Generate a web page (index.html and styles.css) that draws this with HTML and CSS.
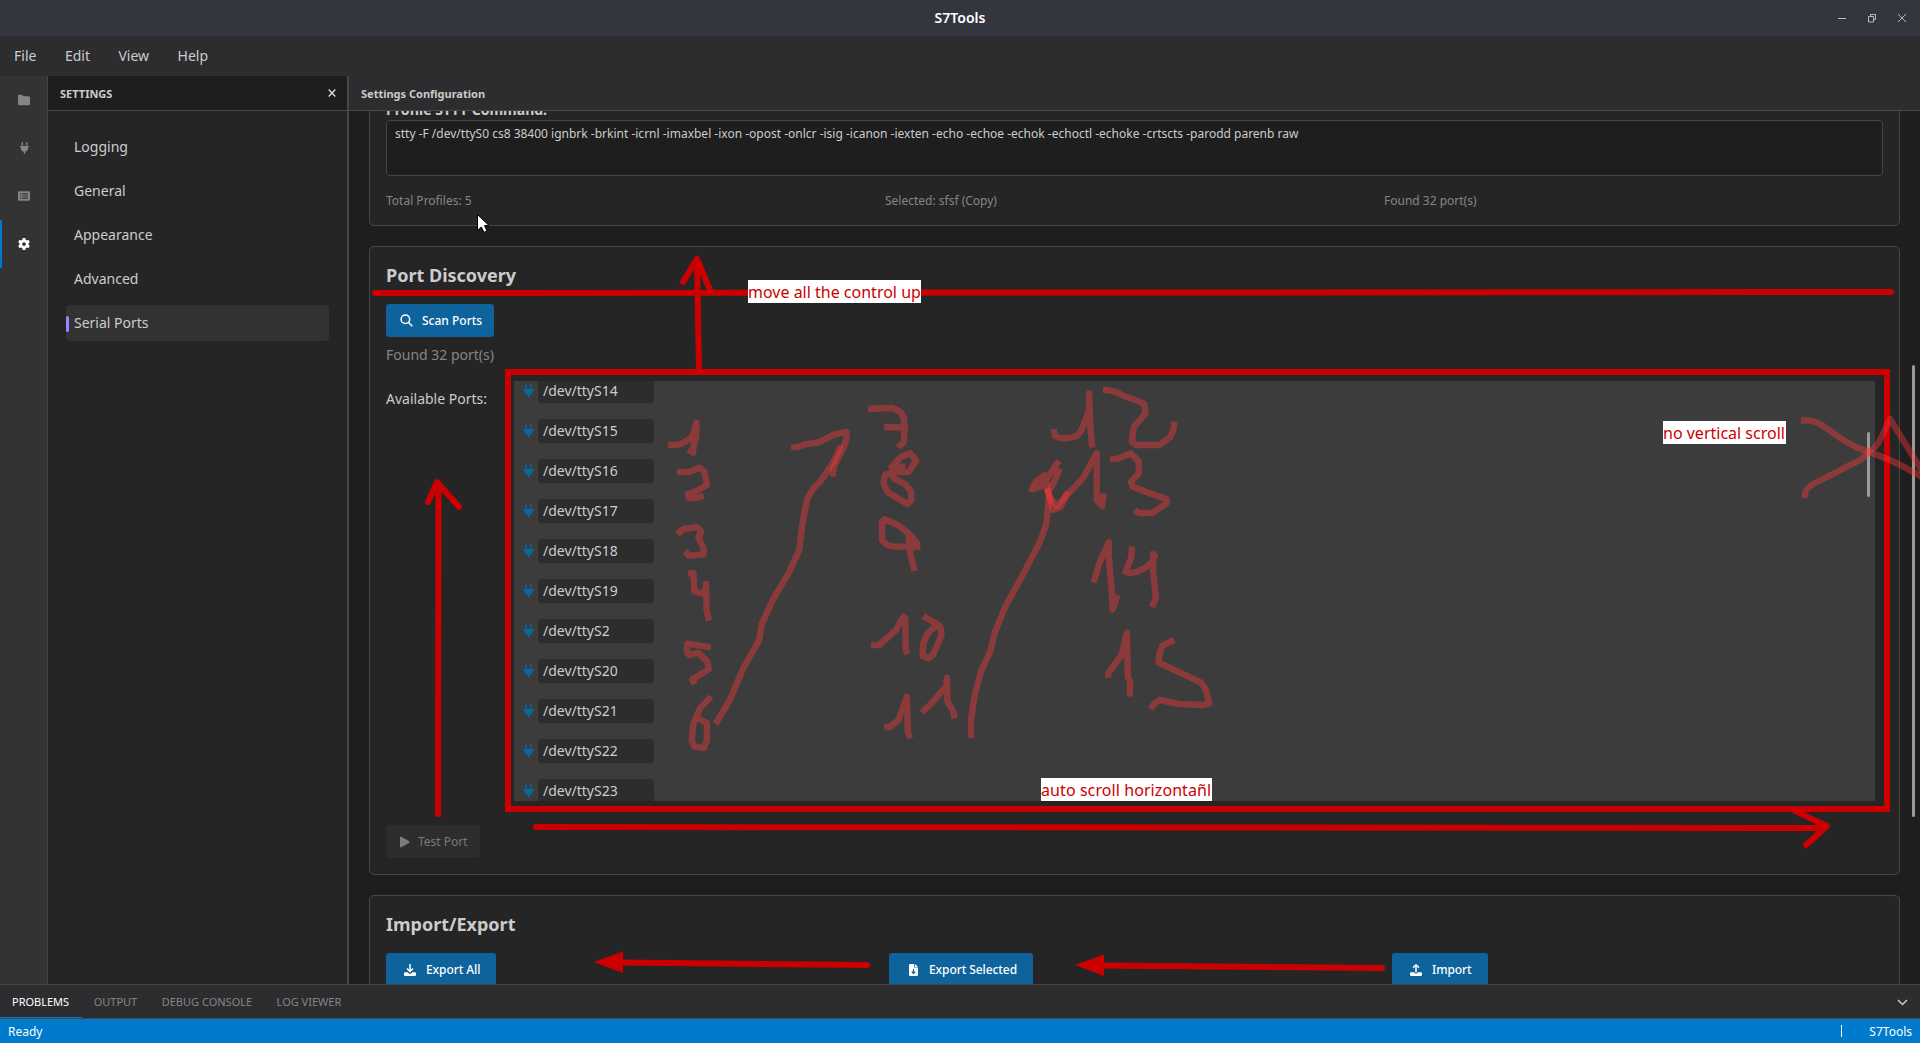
FILE: index.html
```html
<!DOCTYPE html>
<html lang="en">
<head>
<meta charset="utf-8">
<title>S7Tools</title>
<link rel="stylesheet" href="styles.css">
</head>
<body>
<svg class="defs" width="0" height="0">
  <symbol id="plug" viewBox="0 0 384 512"><path d="M96 0C78.300 0 64 14.300 64 32v96h64V32c0-17.700-14.300-32-32-32zM288 0c-17.700 0-32 14.300-32 32v96h64V32c0-17.700-14.300-32-32-32zM32 160c-17.700 0-32 14.300-32 32s14.300 32 32 32v32c0 77.400 55 142 128 156.800V480c0 17.700 14.300 32 32 32s32-14.300 32-32V412.800C297 398 352 333.400 352 256V224c17.700 0 32-14.300 32-32s-14.300-32-32-32H32z"/></symbol>
  <symbol id="gear" viewBox="0 0 512 512"><path d="M495.900 166.600c3.200 8.700 .5 18.400-6.400 24.600l-43.300 39.400c1.100 8.300 1.700 16.800 1.700 25.400s-.6 17.100-1.700 25.400l43.300 39.400c6.900 6.200 9.600 15.900 6.400 24.600c-4.400 11.900-9.700 23.300-15.800 34.300l-4.700 8.100c-6.600 11-14 21.400-22.100 31.200c-5.900 7.200-15.700 9.600-24.500 6.800l-55.700-17.700c-13.400 10.300-28.200 18.900-44 25.400l-12.500 57.100c-2 9.100-9 16.300-18.200 17.800c-13.800 2.300-28 3.500-42.500 3.500s-28.700-1.200-42.500-3.500c-9.200-1.500-16.200-8.700-18.200-17.800l-12.500-57.100c-15.800-6.500-30.600-15.100-44-25.400L83.100 425.900c-8.800 2.800-18.600 .3-24.500-6.800c-8.100-9.800-15.500-20.200-22.100-31.200l-4.700-8.100c-6.100-11-11.400-22.400-15.800-34.300c-3.200-8.700-.5-18.400 6.400-24.600l43.300-39.400C64.600 273.100 64 264.600 64 256s.6-17.100 1.700-25.400L22.400 191.200c-6.900-6.200-9.600-15.900-6.400-24.600c4.400-11.900 9.700-23.300 15.800-34.300l4.700-8.100c6.600-11 14-21.400 22.100-31.200c5.900-7.200 15.700-9.600 24.500-6.800l55.700 17.700c13.400-10.300 28.200-18.900 44-25.400l12.500-57.100c2-9.100 9-16.300 18.200-17.800C227.300 1.200 241.500 0 256 0s28.700 1.200 42.500 3.500c9.200 1.500 16.200 8.700 18.200 17.800l12.500 57.100c15.800 6.500 30.600 15.100 44 25.400l55.700-17.700c8.800-2.800 18.600-.3 24.500 6.800c8.100 9.800 15.500 20.200 22.100 31.200l4.700 8.100c6.100 11 11.400 22.400 15.800 34.300zM256 336a80 80 0 1 0 0-160 80 80 0 1 0 0 160z"/></symbol>
</svg>

<div class="app">
  <header class="titlebar">
    <span class="title">S7Tools</span>
    <div class="window-buttons">
      <svg width="10" height="10" viewBox="0 0 10 10"><path d="M1 5.500h8"/></svg>
      <svg width="10" height="10" viewBox="0 0 10 10"><path d="M1.500 3.500h5v5.500h-5zM3.500 3.500v-2h5v5h-2"/></svg>
      <svg width="10" height="10" viewBox="0 0 10 10"><path d="M1 1l8 8M9 1l-8 8"/></svg>
    </div>
  </header>

  <nav class="menubar"><span>File</span><span>Edit</span><span>View</span><span>Help</span></nav>

  <div class="workspace">
    <nav class="activity">
      <div class="activity-item"><svg width="12" height="12" viewBox="0 0 12 12"><path d="M0 2Q0 .8 1.200 .8H4L5.300 2.200H10.800Q12 2.200 12 3.300V10Q12 11.200 10.800 11.200H1.200Q0 11.200 0 10z"/></svg></div>
      <div class="activity-item"><svg width="9" height="12"><use href="#plug"/></svg></div>
      <div class="activity-item"><svg width="12" height="12" viewBox="0 0 12 12"><path fill-rule="evenodd" d="M1 1.300h10q1 0 1 1v7.400q0 1-1 1H1q-1 0-1-1V2.300q0-1 1-1zM2 3.200v1.200h1.200V3.200zM4.200 3.200v1.200h5.800V3.200zM2 5.400v1.200h1.200V5.400zM4.200 5.400v1.200h5.800V5.400zM2 7.600v1.200h1.200V7.600zM4.200 7.600v1.200h5.800V7.600z"/></svg></div>
      <div class="activity-item active"><svg width="12" height="12"><use href="#gear"/></svg></div>
    </nav>

    <aside class="sidebar">
      <div class="sidebar-head"><span>SETTINGS</span><svg width="8" height="8" viewBox="0 0 8 8"><path d="M.7 .5l6.600 7M7.300 .5l-6.600 7"/></svg></div>
      <div class="sidebar-list">
        <div class="side-item">Logging</div>
        <div class="side-item">General</div>
        <div class="side-item">Appearance</div>
        <div class="side-item">Advanced</div>
        <div class="side-item selected">Serial Ports</div>
      </div>
    </aside>

    <main class="content">
      <div class="content-head">Settings Configuration</div>
      <div class="scroll">
        <section class="card profile">
          <div class="field-label">Profile STTY Command:</div>
          <div class="textarea">stty -F /dev/ttyS0 cs8 38400 ignbrk -brkint -icrnl -imaxbel -ixon -opost -onlcr -isig -icanon -iexten -echo -echoe -echok -echoctl -echoke -crtscts -parodd parenb raw</div>
          <div class="stats"><span>Total Profiles: 5</span><span>Selected: sfsf (Copy)</span><span>Found 32 port(s)</span></div>
        </section>

        <section class="card discovery">
          <h2>Port Discovery</h2>
          <button class="btn scan"><svg width="13" height="13" viewBox="0 0 13 13"><circle cx="5.400" cy="5.200" r="4.300"/><path d="M8.500 8.400l3.800 3.900"/></svg>Scan Ports</button>
          <div class="found">Found 32 port(s)</div>
          <div class="ports-row">
            <div class="ports-label">Available Ports:</div>
            <div class="ports">
              <div class="port"><svg width="11" height="14"><use href="#plug"/></svg><span>/dev/ttyS14</span></div>
              <div class="port"><svg width="11" height="14"><use href="#plug"/></svg><span>/dev/ttyS15</span></div>
              <div class="port"><svg width="11" height="14"><use href="#plug"/></svg><span>/dev/ttyS16</span></div>
              <div class="port"><svg width="11" height="14"><use href="#plug"/></svg><span>/dev/ttyS17</span></div>
              <div class="port"><svg width="11" height="14"><use href="#plug"/></svg><span>/dev/ttyS18</span></div>
              <div class="port"><svg width="11" height="14"><use href="#plug"/></svg><span>/dev/ttyS19</span></div>
              <div class="port"><svg width="11" height="14"><use href="#plug"/></svg><span>/dev/ttyS2</span></div>
              <div class="port"><svg width="11" height="14"><use href="#plug"/></svg><span>/dev/ttyS20</span></div>
              <div class="port"><svg width="11" height="14"><use href="#plug"/></svg><span>/dev/ttyS21</span></div>
              <div class="port"><svg width="11" height="14"><use href="#plug"/></svg><span>/dev/ttyS22</span></div>
              <div class="port"><svg width="11" height="14"><use href="#plug"/></svg><span>/dev/ttyS23</span></div>
              <div class="thumb ports-thumb"></div>
            </div>
          </div>
          <button class="btn test"><svg width="10" height="12" viewBox="0 0 10 12"><path d="M0 1.200Q.2 .2 1.300 .8L9.300 5.300Q10 6 9.300 6.700L1.300 11.200Q.2 11.700 0 10.800z"/></svg>Test Port</button>
        </section>

        <section class="card transfer">
          <h2>Import/Export</h2>
          <div class="transfer-row">
            <div><button class="btn wide export-all"><svg width="12" height="12" viewBox="0 0 12 12"><path class="line" d="M6 0v7M3 4.500l3 3 3-3"/><path d="M0 9.300q0-1.100 1.100-1.100H3.600L6 10.200 8.400 8.200h2.500Q12 8.200 12 9.300v1.500Q12 12 10.900 12H1.100Q0 12 0 10.800z"/></svg>Export All</button></div>
            <div><button class="btn wide export-selected"><svg class="doc" width="9" height="12" viewBox="0 0 9 12"><path d="M0 1.200Q0 0 1.200 0H5.200V3.600H9V10.800Q9 12 7.800 12H1.200Q0 12 0 10.800zM6 0L9 2.900H6z"/><path class="cut" d="M4.500 5v4.500M2.700 7.700l1.800 1.800 1.800-1.800"/></svg>Export Selected</button></div>
            <div><button class="btn wide import"><svg width="12" height="12" viewBox="0 0 12 12"><path class="line" d="M6 8.500V1M3 3.800l3-3 3 3"/><path d="M0 9.300q0-1.100 1.100-1.100H4.200Q4.400 9.600 6 9.700 7.600 9.600 7.800 8.200h3.100Q12 8.200 12 9.300v1.500Q12 12 10.900 12H1.100Q0 12 0 10.800z"/></svg>Import</button></div>
          </div>
        </section>
        <div class="thumb page-thumb"></div>
      </div>
    </main>
  </div>

  <div class="panel-tabs">
    <span class="tab current">PROBLEMS</span><span class="tab">OUTPUT</span><span class="tab">DEBUG CONSOLE</span><span class="tab">LOG VIEWER</span>
    <svg class="chevron" width="11" height="7" viewBox="0 0 11 7"><path d="M1 1l4.500 4.500L10 1"/></svg>
  </div>
  <footer class="statusbar"><span>Ready</span><span class="right"><i></i>S7Tools</span></footer>
</div>

<svg class="annotations" width="1920" height="1043" viewBox="0 0 1920 1043">
  <g class="marker">
    <path d="M375 293L1891 292"/>
    <rect class="frame" x="508" y="372" width="1379" height="437"/>
    <path class="flat" d="M699 371L697 262"/>
    <path d="M683 282L697 259 710 290"/>
    <path d="M438 814L438.500 484M428 502L437 482 459 507"/>
    <path d="M536 827L1824 828M1795 811L1827 826 1806 845"/>
    <path d="M867 965L620 962.500M1382 968L1100 965.500"/>
    <path class="head" d="M593.500 962L623 951.500V973zM1075 965L1104 954.500V976z"/>
  </g>
  <g class="pen" transform="translate(640 380) scale(.408163 .333333)">
    <path d="M69 195H92Q110 190 128 170L138 128V168L132 193 130 218 118 208"/>
    <path d="M91 276H120L146 263 158 275 164 315 140 332 117 342 120 354H138L156 348"/>
    <path d="M91 462L107 447 140 441 150 455 143 472 156 506V523L121 527 110 515"/>
    <path d="M118 580H131L133 633 158 644 162 612 163 690 169 722"/>
    <path d="M174 802L116 791 115 818 122 825 142 818 165 845 169 868 128 898 134 913"/>
    <path d="M174 950L147 985 130 1035 127 1085 134 1100 157 1104 164 1080V1030L143 1015"/>
    <path d="M185 1032L220 960 253 865 292 780 298 733 325 660 365 578 390 510 398 430 410 355 425 325 443 303 474 245 490 205 489 195"/>
    <path d="M370 202L386 201 405 193 440 186 475 164 506 156 506 175 500 200 475 260 472 290"/>
    <path d="M559 87L618 84 638 95 647 117V185L633 203M598 141L657 143"/>
    <path d="M650 260L638 260 622 275 616 262 640 230 662 220 677 242 658 276 625 276 600 285 597 310 607 337 655 372 665 360 664 335 650 313 622 295 615 275"/>
    <path d="M679 510V490L660 462 632 435 600 418 593 425V480L605 495 620 500H672L658 465 662 520 673 573"/>
    <path d="M566 795H586L627 750 645 710 650 715 651 808 655 823M694 708L735 738 739 765 718 825 707 834 692 828 694 790 705 760 730 732"/>
    <path d="M598 1041H612L633 1020 654 950 656 1055 662 1075M690 998L710 975 750 920 752 893 753 965 768 995 770 1016"/>
    <path d="M811 1074V1020L820 945 835 875 858 815 870 755 895 680 940 580 980 485 995 435 1002 350 992 285 970 305 960 328 985 318 1003 285 1026 242"/>
    <path d="M1029 265L1012 312 1000 335 1012 390 1030 382 1048 335"/>
    <path d="M997 325L1003 350 1021 378 1050 340 1085 295 1119 220V360L1132 378 1136 340"/>
    <path d="M1014 147L1016 168 1028 174H1050L1070 168 1082 150 1100 90V40L1104 150 1108 203"/>
    <path d="M1134 30Q1165 30 1185 48L1210 58 1235 72 1239 100 1210 140 1205 185 1215 195H1273L1300 170 1308 145 1309 124"/>
    <path d="M1151 238L1170 236 1203 220 1222 245V280L1203 305 1207 320 1245 338 1290 357V370L1255 399H1222L1212 390"/>
    <path d="M1111 608L1127 545 1149 487V535L1158 670V688L1170 645"/>
    <path d="M1206 499L1203 535 1190 575 1200 580Q1235 575 1258 540L1262 520M1257 514V570L1264 655 1254 681"/>
    <path d="M1147 893V880L1180 825 1193 758 1195 890 1201 905 1200 950"/>
    <path d="M1309 780L1280 797 1273 820 1270 847 1375 908 1387 930 1394 970 1380 975 1320 972 1273 960 1263 968 1250 987"/>
  </g>
  <g class="pen">
    <path d="M1801 420.500H1808Q1816 420 1829 430 1842 440 1856 447 1866 451 1872 453L1890 460Q1903 466 1924 478"/>
    <path d="M1805 498V493Q1806 488 1815 483L1827 477 1858 461Q1866 457 1869 451 1876 449 1882 436L1890 419 1924 474"/>
  </g>
  <path class="cursor" d="M477.500 214.500V230.500L481.300 227 484 232.300 487 231 484.500 225.600H489z"/>
</svg>
<div class="note up">move all the control up</div>
<div class="note novert">no vertical scroll</div>
<div class="note horiz">auto scroll horizontañl</div>
</body>
</html>
```
FILE: styles.css
```css
* { box-sizing: border-box; }
body { margin: 0; background: #1e1e1e; color: #cccccc; font: 14px "Noto Sans", sans-serif; overflow: hidden; }
.defs { position: absolute; }
svg { display: block; flex: none; }
.app { width: 1920px; height: 1043px; display: flex; flex-direction: column; }

.titlebar { height: 36px; flex: none; background: #33363f; display: grid; grid-template-columns: 1fr auto 1fr; align-items: center; }
.title { grid-column: 2; color: #fff; font-weight: 600; font-size: 14px; padding-bottom: 2px; }
.window-buttons { display: flex; gap: 20px; justify-content: flex-end; padding-right: 13px; }
.window-buttons svg { fill: none; stroke: #b8babd; stroke-width: 1; }

.menubar { height: 40px; flex: none; background: #2d2d30; display: flex; align-items: center; gap: 28.5px; padding: 0 0 2px 14px; }

.workspace { flex: 1; min-height: 0; display: flex; }
.activity { width: 48px; flex: none; background: #333333; border-right: 1px solid #464647; }
.activity-item { height: 48px; display: flex; align-items: center; justify-content: center; border-left: 2px solid transparent; padding-right: 1px; }
.activity-item svg { fill: #858585; }
.activity-item.active { border-left-color: #007acc; }
.activity-item.active svg { fill: #fff; }

.sidebar { width: 301px; flex: none; background: #252526; border-right: 2px solid #464647; }
.sidebar-head { height: 35px; background: #1e1e1e; border-bottom: 1px solid #464647; display: flex; align-items: center; justify-content: space-between; padding: 0 11px 0 12px; font-size: 11px; font-weight: 700; }
.sidebar-head span { padding-top: 1px; }
.sidebar-head svg { fill: none; stroke: #ddd; stroke-width: 1.3; }
.sidebar-list { padding: 18px 18px; display: flex; flex-direction: column; gap: 8px; }
.side-item { height: 36px; display: flex; align-items: center; padding: 0 0 2px 8px; border-radius: 4px; }
.side-item.selected { background: #323233; padding-left: 0; }
.side-item.selected::before { content: ""; width: 3px; height: 16px; border-radius: 2px; background: #9a84ff; margin: 3px 5px 0 0; }

.content { flex: 1; min-width: 0; display: flex; flex-direction: column; }
.content-head { height: 35px; flex: none; background: #2d2d30; border-bottom: 1px solid #464647; display: flex; align-items: center; padding: 1px 0 0 12px; font-size: 11px; font-weight: 700; }
.scroll { position: relative; flex: 1; min-height: 0; overflow: hidden; padding: 0 20px; background: #1e1e1e; }
.card { background: #252526; border: 1px solid #464647; border-radius: 5px; padding: 16px; }
.profile { margin-top: -28px; height: 143px; }
.field-label { height: 20px; line-height: 20px; font-size: 14px; font-weight: 700; }
.textarea { height: 56px; border: 1px solid #464647; border-radius: 4px; background: #1e1e1e; padding: 4px 8px; font-size: 12px; line-height: 17px; }
.stats { display: grid; grid-template-columns: 1fr 1fr 1fr; margin-top: 16px; font-size: 12px; line-height: 17px; color: #858585; }
.discovery { margin-top: 20px; height: 629px; }
h2 { margin: 0; font-size: 18px; font-weight: 700; line-height: 24px; height: 26px; }
.btn { display: flex; align-items: center; border: 0; border-radius: 3px; background: #0e639c; color: #fff; height: 33px; padding: 0; font: 500 12px "Noto Sans", sans-serif; white-space: nowrap; }
.scan { margin-top: 15px; width: 108px; padding-left: 14px; }
.scan svg { fill: none; stroke: #fff; stroke-width: 1.5; margin-right: 9px; }
.found { margin-top: 8px; line-height: 20px; color: #858585; }
.ports-row { margin-top: 16px; display: flex; }
.ports-label { width: 128px; line-height: 20px; padding-top: 8px; }
.ports { position: relative; width: 1361px; height: 420px; overflow: hidden; background: #3c3c3c; display: flex; flex-direction: column; gap: 16px; }
.port { height: 24px; flex: none; display: flex; align-items: center; padding-left: 9px; gap: 4px; }
.port:first-child { margin-top: -2px; }
.port svg { fill: #0e639c; }
.port span { width: 116px; height: 24px; line-height: 24px; padding-left: 5px; border-radius: 4px; background: #2d2d2d; }
.test { margin-top: 24px; width: 94px; background: #2d2d2e; color: #7a7a7a; font-weight: 400; padding-left: 14px; }
.test svg { fill: #7a7a7a; margin-right: 8px; }
.transfer { margin-top: 20px; height: 160px; }
.transfer-row { display: grid; grid-template-columns: 1fr 1fr 1fr; gap: 12px; margin-top: 15px; }
.wide { padding-left: 18px; letter-spacing: -.08px; }
.export-all { width: 110px; }
.export-selected { width: 144px; }
.import { width: 96px; }
.wide svg { fill: #fff; margin-right: 10px; }
.wide .doc { margin: 0 11px 0 2px; }
.wide .line { fill: none; stroke: #fff; stroke-width: 1.500; }
.wide .cut { fill: none; stroke: #0e639c; stroke-width: 1.200; }
.thumb { position: absolute; width: 3px; border-radius: 2px; background: #9a9a9a; }
.ports-thumb { right: 5px; top: 51px; height: 65px; }
.page-thumb { right: 5px; top: 254px; height: 452px; }

.panel-tabs { height: 35px; flex: none; background: #2d2d30; border-top: 1px solid #464647; border-bottom: 1px solid #464647; display: flex; font-size: 11px; color: #858585; }
.tab { padding: 0 12.5px 0 12px; line-height: 34px; border-bottom: 1px solid transparent; }
.tab.current { color: #fff; border-bottom-color: #007acc; }
.chevron { margin: 14px 12px 0 auto; fill: none; stroke: #ccc; stroke-width: 1.500; }
.statusbar { height: 24px; flex: none; background: #007acc; color: #fff; display: flex; align-items: center; justify-content: space-between; padding: 0 8px; font-size: 12px; }
.right { display: flex; align-items: center; }
.right i { width: 1px; height: 12px; background: #fff; margin-right: 27px; }

.annotations { position: absolute; left: 0; top: 0; }
.marker path, .frame { fill: none; stroke: #cc0000; stroke-width: 6; stroke-linecap: round; stroke-linejoin: round; }
.marker .frame { stroke-linejoin: miter; }
.marker .flat { stroke-linecap: butt; }
.marker .head { fill: #cc0000; stroke: none; }
.pen path { fill: none; stroke: rgba(255, 56, 58, .4); stroke-width: 6.4; stroke-linejoin: round; vector-effect: non-scaling-stroke; }
.cursor { fill: #fff; stroke: #000; stroke-width: 1; }
.note { position: absolute; height: 23px; background: #fff; color: #cc0000; font-size: 16px; line-height: 25px; white-space: nowrap; }
.up { left: 748px; top: 280px; width: 173px; }
.novert { left: 1663px; top: 421px; width: 123px; }
.horiz { left: 1041px; top: 778px; width: 171px; letter-spacing: .08px; }
```
